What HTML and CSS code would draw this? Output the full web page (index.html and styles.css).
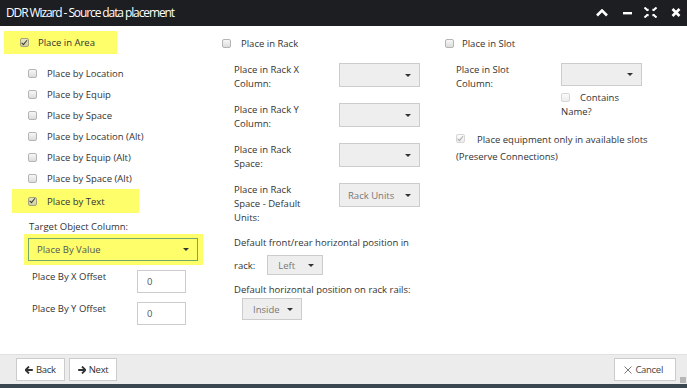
FILE: index.html
```html
<!DOCTYPE html>
<html lang="en">
<head>
    <meta charset="UTF-8">
    <title>DDR Wizard - Source data placement</title>
    <link rel="stylesheet" href="styles.css">
</head>
<body>
<div class="dialog">
    <div class="titlebar">
        <span class="title">DDR Wizard - Source data placement</span>
        <div class="tools">
            <svg class="tool" width="12" height="8" viewBox="0 0 12 8"><path d="M1 6.5 L6 1.5 L11 6.5" fill="none" stroke="#fff" stroke-width="2.6"/></svg>
            <svg class="tool" width="9" height="8" viewBox="0 0 9 8"><rect x="0" y="3" width="9" height="2.4" fill="#fff"/></svg>
            <svg class="tool" width="13" height="11" viewBox="0 0 13 11"><path d="M0.5 0.5 L4 3.5 M12.5 0.5 L9 3.5 M0.5 10.5 L4 7.5 M12.5 10.5 L9 7.5" stroke="#fff" stroke-width="2"/><path d="M4.5 1.5 V4 H2 Z M8.5 1.5 V4 H11 Z M4.5 9.5 V7 H2 Z M8.5 9.5 V7 H11 Z" fill="#fff"/></svg>
            <svg class="tool" width="10" height="9" viewBox="0 0 10 9"><path d="M1.5 1 L8.5 8 M8.5 1 L1.5 8" stroke="#fff" stroke-width="2.6"/></svg>
        </div>
    </div>

    <div class="content">
        <div class="col col-area">
            <div class="hl hl-area">
                <span class="cb checked"></span>
                <span>Place in Area</span>
            </div>
            <div class="opts">
                <div class="opt"><span class="cb"></span>Place by Location</div>
                <div class="opt"><span class="cb"></span>Place by Equip</div>
                <div class="opt"><span class="cb"></span>Place by Space</div>
                <div class="opt"><span class="cb"></span>Place by Location (Alt)</div>
                <div class="opt"><span class="cb"></span>Place by Equip (Alt)</div>
                <div class="opt"><span class="cb"></span>Place by Space (Alt)</div>
                <div class="opt hl hl-text"><span class="cb checked"></span>Place by Text</div>
            </div>
            <div class="target-label">Target Object Column:</div>
            <div class="hl hl-select">
                <div class="select select-green">Place By Value<span class="caret"></span></div>
            </div>
            <div class="offset-row">
                <span class="offset-label">Place By X Offset</span>
                <div class="num">0</div>
            </div>
            <div class="offset-row">
                <span class="offset-label">Place By Y Offset</span>
                <div class="num">0</div>
            </div>
        </div>

        <div class="col col-rack">
            <div class="head"><span class="cb"></span>Place in Rack</div>
            <div class="field">
                <div class="field-label">Place in Rack X<br>Column:</div>
                <div class="select select-wide"><span class="caret"></span></div>
            </div>
            <div class="field">
                <div class="field-label">Place in Rack Y<br>Column:</div>
                <div class="select select-wide"><span class="caret"></span></div>
            </div>
            <div class="field">
                <div class="field-label">Place in Rack<br>Space:</div>
                <div class="select select-wide"><span class="caret"></span></div>
            </div>
            <div class="field">
                <div class="field-label">Place in Rack<br>Space - Default<br>Units:</div>
                <div class="select select-wide select-short">Rack Units<span class="caret"></span></div>
            </div>
            <div class="line">Default front/rear horizontal position in</div>
            <div class="inline-row">
                <span>rack:</span>
                <div class="select select-small select-left">Left<span class="caret"></span></div>
            </div>
            <div class="line line-rails">Default horizontal position on rack rails:</div>
            <div class="select select-small select-inside">Inside<span class="caret"></span></div>
        </div>

        <div class="col col-slot">
            <div class="head"><span class="cb"></span>Place in Slot</div>
            <div class="slot-field">
                <div class="field-label">Place in Slot<br>Column:</div>
                <div class="slot-right">
                    <div class="select select-wide select-slot"><span class="caret"></span></div>
                    <div class="contains"><span class="cb disabled"></span>Contains Name?</div>
                </div>
            </div>
            <p class="preserve"><span class="cb checked disabled"></span>Place equipment only in available slots (Preserve Connections)</p>
        </div>
    </div>

    <div class="footer">
        <button class="btn">
            <svg width="8" height="8" viewBox="0 0 8 8"><path d="M4 0.5 L0.5 4 L4 7.5 M0.8 4 H7.8" fill="none" stroke="#333" stroke-width="1.8"/></svg>Back
        </button>
        <button class="btn">
            <svg width="8" height="8" viewBox="0 0 8 8"><path d="M4 0.5 L7.5 4 L4 7.5 M7.2 4 H0.2" fill="none" stroke="#333" stroke-width="1.8"/></svg>Next
        </button>
        <button class="btn btn-cancel">
            <svg width="8" height="8" viewBox="0 0 8 8"><path d="M0.5 0.5 L7.5 7.5 M7.5 0.5 L0.5 7.5" stroke="#555" stroke-width="0.8"/></svg>Cancel
        </button>
        <span class="grip"></span>
    </div>
    <div class="taskbar"></div>
</div>
</body>
</html>
```

FILE: styles.css
```css
body {
    margin: 0;
    font-family: "Open Sans", Arial, sans-serif;
    font-size: 9.5px;
    color: #333;
    background: #fff;
}
.dialog {
    width: 687px;
    height: 388px;
    display: flex;
    flex-direction: column;
    overflow: hidden;
}
.titlebar {
    height: 26px;
    background: #1c1e22;
    display: flex;
    align-items: center;
    justify-content: space-between;
    padding: 0 6px 0 6px;
    flex-shrink: 0;
}
.title {
    color: #fff;
    font-size: 12px;
    letter-spacing: -1.1px;
    margin-top: -2px;
}
.tools {
    display: flex;
    align-items: center;
    margin-top: -1px;
}
.tool {
    display: block;
}
.tools .tool:nth-child(1) { margin-right: 15px; }
.tools .tool:nth-child(2) { margin-right: 12px; }
.tools .tool:nth-child(3) { margin-right: 14px; }

.content {
    flex: 1;
    display: flex;
    padding-top: 5px;
}
.col {
    display: flex;
    flex-direction: column;
    align-items: flex-start;
}
.col-area { width: 215px; }
.col-rack { width: 222px; }
.col-slot { flex: 1; }

.hl {
    background: #fefe6a;
}
.cb {
    display: inline-block;
    box-sizing: border-box;
    width: 9px;
    height: 9px;
    border: 1px solid #b4b4b4;
    border-radius: 2px;
    background: linear-gradient(#f7f7f7, #dcdcdc);
    position: relative;
    flex-shrink: 0;
}
.cb.checked::after {
    content: "";
    position: absolute;
    left: 1.5px;
    top: -0.5px;
    width: 2px;
    height: 4.5px;
    border-right: 1.7px solid #333;
    border-bottom: 1.7px solid #333;
    transform: rotate(40deg);
}
.hl .cb {
    background: linear-gradient(#e6e6bc, #cfcfa2);
    border-color: #a3a37c;
}
.cb.disabled {
    border-color: #d6d6d6;
    background: linear-gradient(#fbfbfb, #ededed);
}
.cb.checked.disabled::after {
    border-color: #a8a8a8;
}

.hl-area {
    margin-left: 4px;
    width: 113px;
    height: 23px;
    padding-left: 16px;
    box-sizing: border-box;
    display: flex;
    align-items: center;
    gap: 9px;
}
.opts {
    margin-top: 9px;
    margin-left: 12px;
}
.opt {
    height: 21px;
    padding-left: 16px;
    display: flex;
    align-items: center;
    gap: 10px;
}
.hl-text {
    width: 127px;
    height: 24px;
    box-sizing: border-box;
}
.target-label {
    margin: 7px 0 0 29px;
    line-height: 14px;
}
.hl-select {
    margin-left: 24px;
    padding: 4px 5px 4px 4px;
}
.select {
    box-sizing: border-box;
    height: 24px;
    border: 1px solid #ccc;
    background: #eee;
    color: #777;
    display: flex;
    align-items: center;
    justify-content: space-between;
    padding: 0 8px 0 8px;
}
.caret {
    width: 0;
    height: 0;
    border-left: 3.5px solid transparent;
    border-right: 3.5px solid transparent;
    border-top: 3.5px solid #333;
}
.select-green {
    width: 170px;
    height: 23px;
    border-color: #73a86c;
    background: transparent;
    color: #555;
}
.offset-row {
    display: flex;
    align-items: flex-start;
    margin-top: 5px;
    line-height: 14px;
}
.offset-row + .offset-row {
    margin-top: 9px;
}
.offset-label {
    width: 105px;
    padding-left: 32px;
}
.num {
    box-sizing: border-box;
    width: 49px;
    height: 23px;
    border: 1px solid #ccc;
    padding-left: 9px;
    line-height: 21px;
    color: #555;
}

.head {
    height: 23px;
    display: flex;
    align-items: center;
    gap: 10px;
    padding-left: 7px;
    margin-top: 1px;
}
.col-slot .head {
    padding-left: 8px;
    gap: 8px;
}
.field {
    display: flex;
    align-items: flex-start;
    margin-top: 8px;
    margin-left: 19px;
}
.field + .field {
    margin-top: 12px;
}
.field-label {
    width: 105px;
    line-height: 14px;
}
.select-wide {
    width: 81px;
    justify-content: flex-end;
}
.select-short {
    justify-content: space-between;
    height: 24px;
}
.line {
    margin: 11px 0 0 19px;
    line-height: 14px;
}
.inline-row {
    display: flex;
    align-items: center;
    margin: 5px 0 0 19px;
}
.select-small {
    height: 20px;
    padding: 0 8px 0 10px;
}
.select-left {
    width: 56px;
    margin-left: 12px;
}
.line-rails {
    margin-top: 8px;
}
.select-inside {
    width: 60px;
    height: 22px;
    margin: 1px 0 0 27px;
}

.slot-field {
    display: flex;
    align-items: flex-start;
    margin: 8px 0 0 19px;
}
.select-slot {
    height: 23px;
}
.contains {
    width: 60px;
    margin-top: 5px;
    line-height: 14px;
}
.contains .cb {
    margin-right: 10px;
    vertical-align: -1px;
}
.preserve {
    margin: 12px 0 0 19px;
    width: 220px;
    line-height: 17px;
}
.preserve .cb {
    margin-right: 12px;
    vertical-align: 0;
}

.footer {
    height: 30px;
    flex-shrink: 0;
    background: #ececec;
    border-top: 1px solid #e0e0e0;
    box-sizing: border-box;
    display: flex;
    align-items: center;
    padding: 0 16px;
    gap: 4px;
    position: relative;
}
.btn {
    height: 23px;
    background: #fff;
    border: 1px solid #ccc;
    font-family: "Open Sans", Arial, sans-serif;
    font-size: 9.5px;
    color: #333;
    padding: 0 8px;
    display: flex;
    align-items: center;
    gap: 3px;
    letter-spacing: -0.3px;
}
.btn-cancel {
    margin-left: auto;
    padding: 0 12px 0 9px;
    margin-right: -5px;
    color: #444;
}
.grip {
    position: absolute;
    right: 1px;
    bottom: 1px;
    width: 6px;
    height: 6px;
    background: radial-gradient(circle, #777 0.6px, transparent 0.8px) 0 0 / 2px 2px;
}
.taskbar {
    height: 4px;
    background: #3a4650;
    flex-shrink: 0;
}
```
